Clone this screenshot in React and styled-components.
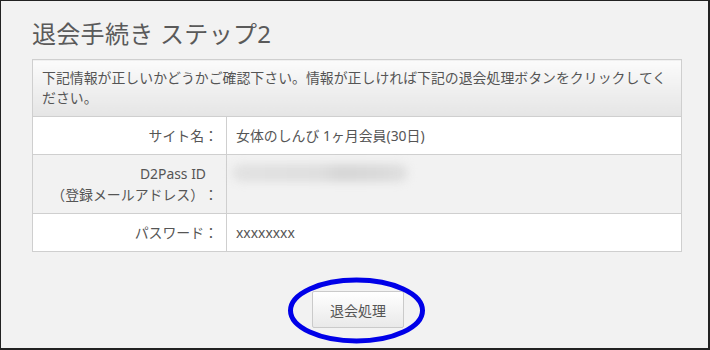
import React from "react";
import styled, { createGlobalStyle } from "styled-components";

const GlobalStyle = createGlobalStyle`
  html, body { margin: 0; padding: 0; }
  body {
    font-family: "Noto Sans", "Noto Sans CJK JP", sans-serif;
    background: #f2f2f2;
    text-spacing-trim: space-all;
  }
`;

const Frame = styled.div`
  position: relative;
  box-sizing: border-box;
  width: 710px;
  height: 350px;
  background: #f2f2f2;
  border-top: 1px solid #222;
  border-left: 1px solid #222;
  border-right: 2px solid #222;
  border-bottom: 2px solid #222;
  padding: 18px 26px 0 31px;
  overflow: hidden;
`;

const Title = styled.h1`
  margin: 0 0 11px;
  font-size: 24px;
  line-height: 29px;
  font-weight: 400;
  color: #5a5a5a;
  letter-spacing: 0.3px;
`;

const Table = styled.table`
  width: 650px;
  border-collapse: collapse;
  font-size: 13.9px;
  color: #555;
`;

const HeaderCell = styled.td`
  padding: 8px 10px 8px 9px;
  line-height: 20px;
  border: 1px solid #cfcfcf;
  background: linear-gradient(to bottom, #fbfbfb, #e5e5e5);
`;

const Row = styled.tr`
  background: ${(p) => (p.$shaded ? "#f2f2f2" : "#ffffff")};
`;

const LabelCell = styled.td`
  box-sizing: border-box;
  width: 194px;
  padding: 8px 8px 8px 10px;
  line-height: 21px;
  text-align: right;
  vertical-align: top;
  border: 1px solid #cfcfcf;
`;

const LabelLine = styled.span`
  display: block;
  padding-right: ${(p) => p.$pad || 0}px;
`;

const ValueCell = styled.td`
  padding: 8px 9px;
  line-height: 21px;
  vertical-align: top;
  border: 1px solid #cfcfcf;
`;

const Blurred = styled.div`
  margin: 1px 0 0 -4px;
  width: 176px;
  height: 18px;
  border-radius: 9px;
  background: linear-gradient(
    to right,
    #e2e2e2 0%,
    #dedede 50%,
    #d6d6d6 62%,
    #dadada 85%,
    #e0e0e0 100%
  );
  filter: blur(4px);
`;

const ButtonRow = styled.div`
  width: 650px;
  display: flex;
  justify-content: center;
  margin-top: 39px;
`;

const Button = styled.button`
  box-sizing: border-box;
  width: 92px;
  height: 37px;
  font-family: inherit;
  font-size: 14px;
  color: #555;
  border: 1px solid #cacaca;
  border-radius: 2px;
  background: linear-gradient(to bottom, #ffffff, #e9e9e9);
  cursor: pointer;
  margin-left: 2px;
`;

const Annotation = styled.svg`
  position: absolute;
  left: 286px;
  top: 276px;
  pointer-events: none;
`;

export default function App() {
  return (
    <>
      <GlobalStyle />
      <Frame>
        <Title>退会手続き ステップ2</Title>
        <Table>
          <tbody>
            <tr>
              <HeaderCell colSpan={2}>
                下記情報が正しいかどうかご確認下さい。情報が正しければ下記の退会処理ボタンをクリックしてください。
              </HeaderCell>
            </tr>
            <Row>
              <LabelCell>サイト名：</LabelCell>
              <ValueCell>女体のしんび 1ヶ月会員(30日)</ValueCell>
            </Row>
            <Row $shaded>
              <LabelCell>
                <LabelLine $pad={12}>D2Pass ID</LabelLine>
                <LabelLine>（登録メールアドレス）：</LabelLine>
              </LabelCell>
              <ValueCell>
                <Blurred />
              </ValueCell>
            </Row>
            <Row>
              <LabelCell>パスワード：</LabelCell>
              <ValueCell>xxxxxxxx</ValueCell>
            </Row>
          </tbody>
        </Table>
        <ButtonRow>
          <Button type="button">退会処理</Button>
        </ButtonRow>
        <Annotation width="140" height="70" viewBox="0 0 140 70">
          <ellipse cx="69.5" cy="33.5" rx="66" ry="30.5" fill="none" stroke="#0000e8" strokeWidth="5" />
        </Annotation>
      </Frame>
    </>
  );
}
